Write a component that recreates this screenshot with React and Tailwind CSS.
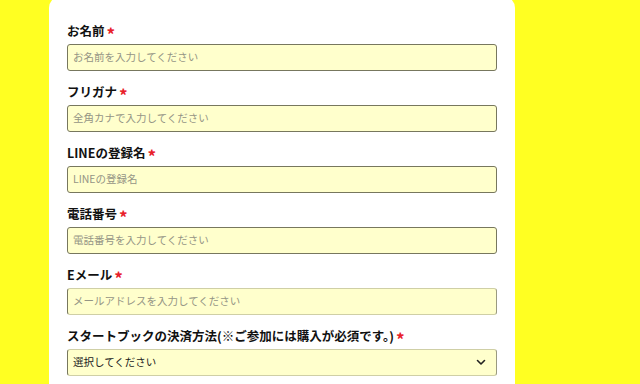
import React from "react";

const font = { fontFamily: '"Noto Sans CJK JP", "Noto Sans", sans-serif' };

function Label({ children }) {
  return (
    <div className="flex items-center h-[18px] text-[12.5px] font-bold text-[#111] leading-none" style={font}>
      <span>{children}</span>
      <span className="ml-[2px] text-[#e8202a] text-[17px] font-bold leading-none mt-[5px]">*</span>
    </div>
  );
}

function Field({ label, placeholder, light }) {
  return (
    <div className="flex flex-col gap-[4px]">
      <Label>{label}</Label>
      <div
        className={
          "h-[27px] rounded-[3px] border bg-[#ffffcc] flex items-center pl-[5px] " +
          (light ? "border-[#cfcfa6] border-l-[#77775e] border-r-[#9a9a80]" : "border-[#77775e]")
        }
      >
        <span className="text-[10.5px] text-[#959585] leading-none" style={font}>
          {placeholder}
        </span>
      </div>
    </div>
  );
}

export default function App() {
  return (
    <div className="w-[640px] h-[384px] overflow-hidden bg-[#ffff22]">
      <div className="ml-[49px] w-[466px] h-[400px] mt-[-4px] bg-white rounded-[12px] pt-[26px] px-[18px] flex flex-col gap-[12px]">
        <Field label="お名前" placeholder="お名前を入力してください" />
        <Field label="フリガナ" placeholder="全角カナで入力してください" />
        <Field label="LINEの登録名" placeholder="LINEの登録名" />
        <Field label="電話番号" placeholder="電話番号を入力してください" />
        <Field label="Eメール" placeholder="メールアドレスを入力してください" light />
        <div className="flex flex-col gap-[4px]">
          <Label>スタートブックの決済方法(※ご参加には購入が必須です。)</Label>
          <div className="h-[27px] rounded-[3px] border border-[#cfcfa6] border-l-[#77775e] border-r-[#9a9a80] bg-[#ffffcc] flex items-center justify-between pl-[5px] pr-[10px]">
            <span className="text-[10.5px] text-[#222] leading-none" style={font}>
              選択してください
            </span>
            <svg width="10" height="7" viewBox="0 0 10 7" fill="none">
              <path d="M1.5 1.5 L5 5 L8.5 1.5" stroke="#222" strokeWidth="1.6" strokeLinecap="round" strokeLinejoin="round" />
            </svg>
          </div>
        </div>
      </div>
    </div>
  );
}
